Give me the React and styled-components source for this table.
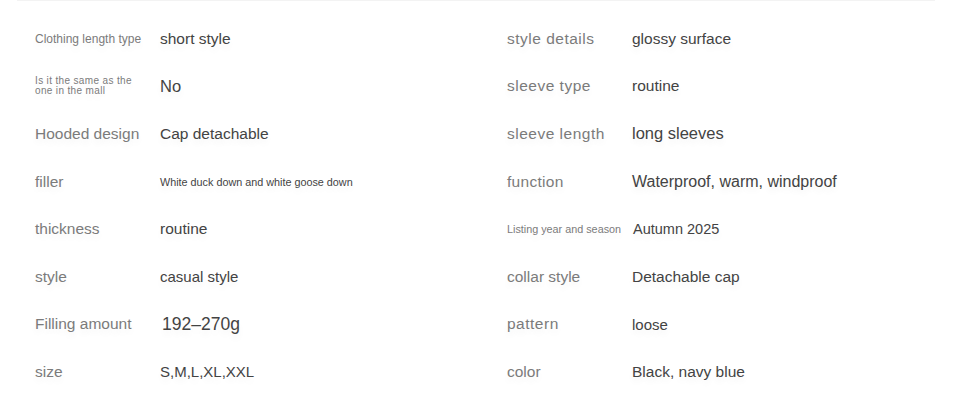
import React from 'react';
import styled, {createGlobalStyle} from "styled-components";

const GlobalStyle = createGlobalStyle`
    html, body {
        margin: 0;
        padding: 0;
        background: #ffffff;
    }
    body {
        font-family: "Liberation Sans", Arial, sans-serif;
        -webkit-font-smoothing: antialiased;
    }
`;

const Sheet = styled.section`
    width: 918px;
    height: 419px;
    margin: 0 auto 0 17px;
    border-top: 1px solid #f3f3f3;
    box-sizing: border-box;
    padding: 14px 0 0 18px;
`;

const Grid = styled.dl`
    margin: 0;
    display: grid;
    grid-template-columns: 125px 347px 125px auto;
    grid-auto-rows: 47.6px;
    align-items: center;
`;

const Label = styled.dt`
    margin: 0;
    color: #7b7b7b;
    font-size: ${p => p.size || 15.5}px;
    line-height: ${p => p.lh ? `${p.lh}px` : 'normal'};
    letter-spacing: ${p => p.spacing || 0}px;
    white-space: nowrap;
    text-shadow: 0 5px 6px rgba(0, 0, 0, 0.05);
`;

const Value = styled.dd`
    margin: 0;
    padding-left: ${p => p.shift || 0}px;
    color: #434343;
    font-size: ${p => p.size || 15.5}px;
    letter-spacing: ${p => p.spacing || 0}px;
    white-space: nowrap;
    text-shadow: 0 5px 6px rgba(0, 0, 0, 0.05);
`;

const rows = [
    [
        {label: 'Clothing length type', labelSize: 12, value: 'short style'},
        {label: 'style details', spacing: 0.5, value: 'glossy surface'},
    ],
    [
        {label: 'Is it the same as the\none in the mall', labelSize: 10, lh: 10, spacing: 0.35, value: 'No', valueSize: 16.5},
        {label: 'sleeve type', spacing: 0.5, value: 'routine'},
    ],
    [
        {label: 'Hooded design', value: 'Cap detachable'},
        {label: 'sleeve length', spacing: 0.5, value: 'long sleeves', valueSize: 16.5},
    ],
    [
        {label: 'filler', value: 'White duck down and white goose down', valueSize: 10.8},
        {label: 'function', spacing: 0.3, value: 'Waterproof, warm, windproof', valueSize: 16},
    ],
    [
        {label: 'thickness', value: 'routine'},
        {label: 'Listing year and season', labelSize: 10.8, value: 'Autumn 2025', valueSize: 14.5, shift: 1},
    ],
    [
        {label: 'style', value: 'casual style', valueSize: 15},
        {label: 'collar style', value: 'Detachable cap'},
    ],
    [
        {label: 'Filling amount', value: '192–270g', valueSize: 17.5, shift: 2},
        {label: 'pattern', spacing: 0.5, value: 'loose', valueSize: 15},
    ],
    [
        {label: 'size', value: 'S,M,L,XL,XXL', valueSize: 15},
        {label: 'color', value: 'Black, navy blue'},
    ],
];

const Cell = ({item}) => (
    <>
        <Label size={item.labelSize} lh={item.lh} spacing={item.spacing}>
            {item.label.split('\n').map((line, i) => (
                <React.Fragment key={i}>{i > 0 && <br/>}{line}</React.Fragment>
            ))}
        </Label>
        <Value size={item.valueSize} shift={item.shift}>{item.value}</Value>
    </>
);

const App = () => {
    return (
        <>
            <GlobalStyle/>
            <Sheet>
                <Grid>
                    {rows.map((pair, i) => (
                        <React.Fragment key={i}>
                            <Cell item={pair[0]}/>
                            <Cell item={pair[1]}/>
                        </React.Fragment>
                    ))}
                </Grid>
            </Sheet>
        </>
    )
}
export default App;
